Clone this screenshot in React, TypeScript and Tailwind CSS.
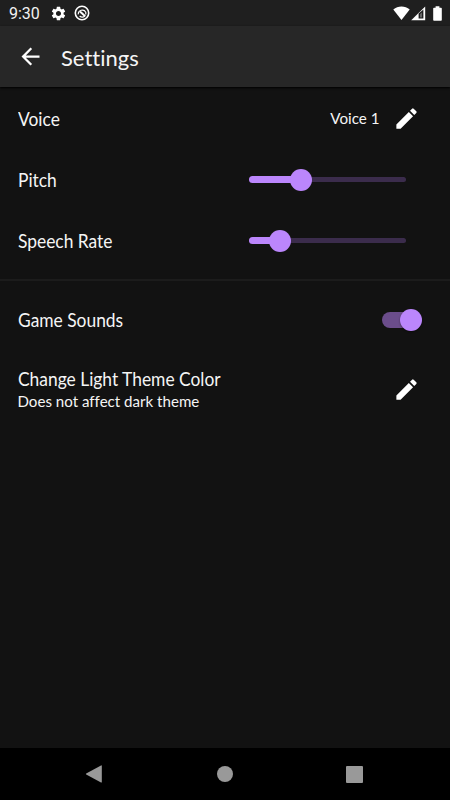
import type { ReactNode } from "react";
import { MdArrowBack, MdEdit, MdSettings } from "react-icons/md";

function StatusBar() {
  return (
    <div className="flex h-[26px] items-center bg-[#1f1f1f] pl-[9px] pr-2 text-white">
      <span className="mt-[2px] w-[41px] font-['Roboto',sans-serif] text-[16px] leading-none text-[#f2f2f2]">
        9:30
      </span>
      <MdSettings className="h-[17px] w-[17px]" />
      <svg className="ml-[7px] h-4 w-4" viewBox="0 0 16 16" fill="none">
        <circle cx="8" cy="8" r="6.7" stroke="white" strokeWidth="1.6" />
        <path
          d="M4.3 9.4A4 4 0 0 1 11.8 7.2V9.4M11 11A4.2 4.2 0 0 1 5.6 11"
          stroke="white"
          strokeWidth="1.2"
        />
        <path d="M6 6.6L11.2 11.2" stroke="white" strokeWidth="2" />
      </svg>
      <svg className="ml-auto h-[15px] w-[17px]" viewBox="0 0 17 15">
        <path d="M8.5 14L0.3 3.6C2.6 1.6 5.4 0.6 8.5 0.6s5.9 1 8.2 3z" fill="white" />
      </svg>
      <svg className="ml-px h-[15px] w-[15px]" viewBox="0 0 15 15">
        <path d="M0.2 14.2L14.2 0.4V14.2z" fill="white" />
        <path d="M7.6 12.4V7.6L12.4 3.4V12.4z" fill="#1f1f1f" />
        <path d="M9.2 11.4V8L10.8 6.6V11.4z" fill="#777" />
      </svg>
      <svg className="ml-[7px] h-[15px] w-[9px]" viewBox="0 0 9 15">
        <path
          d="M2.6 0.3H6.4V1.8H8a.8.8 0 0 1 .8.8V14a.8.8 0 0 1-.8.8H1a.8.8 0 0 1-.8-.8V2.6A.8.8 0 0 1 1 1.8H2.6z"
          fill="white"
        />
      </svg>
    </div>
  );
}

function AppBar() {
  return (
    <header className="flex h-[61px] items-center bg-[#272727] pl-[17px] shadow-[0_1px_2px_#000]">
      <MdArrowBack className="h-[27px] w-[27px] text-white" />
      <h1 className="ml-[17px] mt-[3px] text-[22px] leading-none">Settings</h1>
    </header>
  );
}

function Row({ label, children }: { label: string; children: ReactNode }) {
  return (
    <div className="flex h-[61px] items-center justify-between pl-[17.5px]">
      <span className="mt-px origin-left scale-x-[0.94] text-[18.5px] leading-[20px]">
        {label}
      </span>
      {children}
    </div>
  );
}

function Slider({ value }: { value: number }) {
  return (
    <div className="relative mr-11 flex h-[22px] w-[157px] items-center">
      <div className="h-[5px] w-full rounded-full bg-[#3b2c4c]" />
      <div
        className="absolute left-0 h-[7px] rounded-full bg-[#bb86fc]"
        style={{ width: `${value}%` }}
      />
      <div
        className="absolute h-[22px] w-[22px] -translate-x-1/2 rounded-full bg-[#bb86fc]"
        style={{ left: `${value}%` }}
      />
    </div>
  );
}

function Switch() {
  return (
    <div className="relative mr-7 flex h-[22px] w-10 items-center">
      <div className="h-4 w-[38px] rounded-full bg-[#6b4d8b]" />
      <div className="absolute right-0 h-[22px] w-[22px] rounded-full bg-[#bb86fc] shadow-[0_1px_2px_rgba(0,0,0,0.4)]" />
    </div>
  );
}

function NavBar() {
  return (
    <nav className="flex h-[52px] items-center justify-between bg-black pl-[85px] pr-[87px]">
      <svg className="h-[18px] w-[18px]" viewBox="0 0 18 18">
        <path d="M1.2 8.5L16 .4q.8-.2.8.6V17q0 .8-.8.5L1.2 9.5q-.6-.5 0-1z" fill="#999" />
      </svg>
      <div className="h-4 w-4 rounded-full bg-[#999]" />
      <div className="h-[17px] w-[17px] rounded-[1px] bg-[#999]" />
    </nav>
  );
}

export default function App() {
  return (
    <div className="flex h-[800px] w-[450px] flex-col overflow-hidden bg-[#121212] font-['Lato',sans-serif] text-[#f5f5f5] [font-variant-ligatures:none]">
      <StatusBar />
      <AppBar />
      <main className="flex-1 pt-px">
        <Row label="Voice">
          <div className="mr-[30.5px] flex items-center">
            <span className="mr-[13px] text-[15.2px] leading-none">Voice 1</span>
            <MdEdit className="h-[27px] w-[27px] text-white" />
          </div>
        </Row>
        <Row label="Pitch">
          <Slider value={33.3} />
        </Row>
        <Row label="Speech Rate">
          <Slider value={20} />
        </Row>
        <div className="mt-2 h-0.5 bg-[#1c1c1c]" />
        <div className="mt-2">
          <Row label="Game Sounds">
            <Switch />
          </Row>
        </div>
        <div className="mt-[9px] flex h-[61px] items-center justify-between pl-[17.5px] pr-[30.5px]">
          <div>
            <div className="origin-left scale-x-[0.94] text-[18.5px] leading-[23px]">
              Change Light Theme Color
            </div>
            <div className="text-[15.1px] leading-[21px]">Does not affect dark theme</div>
          </div>
          <MdEdit className="h-[27px] w-[27px] text-white" />
        </div>
      </main>
      <NavBar />
    </div>
  );
}
